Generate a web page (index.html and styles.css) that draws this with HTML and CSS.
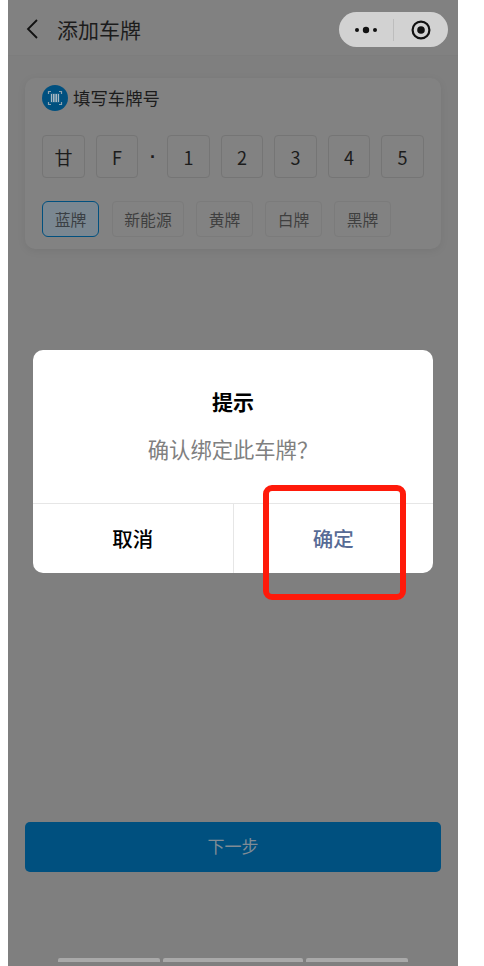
FILE: index.html
```html
<!DOCTYPE html>
<html lang="zh">
<head>
<meta charset="utf-8">
<title>添加车牌</title>
<link rel="stylesheet" href="styles.css">
</head>
<body>
<div class="phone">
  <header class="nav">
    <svg class="back" width="14" height="22" viewBox="0 0 14 22"><path d="M12 2 L3 11 L12 20" fill="none" stroke="#111" stroke-width="1.8"/></svg>
    <h1 class="nav-title">添加车牌</h1>
    <div class="capsule">
      <div class="capsule-part">
        <svg width="24" height="8" viewBox="0 0 24 8"><circle cx="3" cy="4" r="2" fill="#111"/><circle cx="12" cy="4" r="3.2" fill="#111"/><circle cx="21" cy="4" r="2" fill="#111"/></svg>
      </div>
      <div class="capsule-line"></div>
      <div class="capsule-part">
        <svg width="20" height="20" viewBox="0 0 20 20"><circle cx="10" cy="10" r="8.4" fill="none" stroke="#111" stroke-width="2.2"/><circle cx="10" cy="10" r="3.8" fill="#111"/></svg>
      </div>
    </div>
  </header>
  <main class="content">
    <section class="card">
      <div class="card-head">
        <svg class="card-icon" width="26" height="26" viewBox="0 0 26 26"><circle cx="13" cy="13" r="13" fill="#00507f"/><path d="M6.5 9V6.5H9M17 6.5H19.5V9M19.5 17V19.5H17M9 19.5H6.5V17" fill="none" stroke="#8fa3af" stroke-width="1.2"/><path d="M8.5 8.5h9v9h-9z" fill="#2b6a90"/><path d="M9.5 9v8M11.5 9v8M13 9v8M14.5 9v8M16.5 9v8" stroke="#b4c0c7" stroke-width="0.9"/></svg>
        <span class="card-title">填写车牌号</span>
      </div>
      <div class="plate">
        <span class="cell">甘</span>
        <span class="cell">F</span>
        <span class="dot">·</span>
        <span class="cell">1</span>
        <span class="cell">2</span>
        <span class="cell">3</span>
        <span class="cell">4</span>
        <span class="cell">5</span>
      </div>
      <div class="tags">
        <span class="tag tag-active">蓝牌</span>
        <span class="tag tag-wide">新能源</span>
        <span class="tag">黄牌</span>
        <span class="tag">白牌</span>
        <span class="tag">黑牌</span>
      </div>
    </section>
    <button class="next">下一步</button>
    <div class="bars">
      <span class="bar bar-a"></span>
      <span class="bar bar-b"></span>
      <span class="bar bar-a"></span>
    </div>
  </main>
  <div class="dialog">
    <div class="dialog-body">
      <div class="dialog-title">提示</div>
      <div class="dialog-msg">确认绑定此车牌？</div>
    </div>
    <div class="dialog-actions">
      <div class="action">取消</div>
      <div class="action action-ok">确定</div>
    </div>
  </div>
  <div class="highlight"></div>
</div>
</body>
</html>
```
FILE: styles.css
```css
* { box-sizing: border-box; }
html, body { margin: 0; padding: 0; background: #fff; }
body { font-family: "Noto Sans CJK SC", "Noto Sans", sans-serif; }
.phone {
  position: relative;
  width: 450px;
  height: 966px;
  margin-left: 8px;
  background: #7f7f7f;
  overflow: hidden;
}
.nav {
  display: flex;
  align-items: center;
  height: 55px;
  padding: 2px 10px 0 17px;
  background: #818181;
  box-shadow: 0 1px 0 #7d7d7d;
}
.back { flex: none; }
.nav-title {
  margin: 0 0 0 18px;
  font-size: 21px;
  line-height: 30px;
  font-weight: 400;
  color: #1c1c1c;
  flex: 1;
}
.capsule {
  display: flex;
  align-items: center;
  width: 109px;
  height: 35px;
  margin-top: 2px;
  border-radius: 18px;
  background: #d2d2d2;
}
.capsule-part { flex: 1; display: flex; justify-content: center; align-items: center; }
.capsule-line { width: 1px; height: 22px; background: #bdbdbd; }
.content { display: flex; flex-direction: column; padding: 23px 17px 0; }
.card {
  height: 171px;
  padding: 7px 17px 0;
  background: #828282;
  border-radius: 10px;
  box-shadow: 0 2px 8px rgba(0,0,0,0.07);
}
.card-head { display: flex; align-items: center; gap: 5px; height: 26px; }
.card-icon { flex: none; }
.card-title { font-size: 17.4px; line-height: 26px; color: #1c1c1c; }
.plate { display: flex; align-items: center; margin-top: 24px; }
.cell {
  width: 43px;
  height: 43px;
  margin-right: 10.6px;
  display: flex;
  align-items: center;
  justify-content: center;
  border: 1px solid #757575;
  border-radius: 4px;
  font-size: 18px;
  color: #1c1c1c;
}
.cell:last-child { margin-right: 0; }
.dot {
  width: 18px;
  padding-left: 1px;
  font-family: "Liberation Sans", sans-serif;
  font-size: 18px;
  font-weight: 700;
  line-height: 20px;
  color: #1c1c1c;
}
.tags { display: flex; gap: 12px; margin-top: 23px; }
.tag {
  display: flex;
  align-items: center;
  justify-content: center;
  width: 57px;
  height: 36px;
  border: 1px solid #7b7b7b;
  border-radius: 4px;
  font-size: 15.8px;
  color: #3f3f3f;
}
.tag-wide { width: 72px; margin-left: 1px; }
.tag-active { background: #7a8791; border-color: #00507f; color: #3a3f44; border-radius: 6px; }
.next {
  display: block;
  height: 50px;
  margin-top: 573px;
  border: 0;
  border-radius: 5px;
  background: #00507f;
  color: #808c95;
  font: 400 17px/48px "Noto Sans CJK SC", sans-serif;
  padding: 0 0 2px;
}
.bars { display: flex; gap: 3px; margin: 86px 0 0 33px; }
.bar { height: 4px; border-radius: 2px 2px 0 0; background: #a9a9a9; }
.bar-a { width: 102px; }
.bar-b { width: 140px; }
.dialog {
  position: absolute;
  left: 25px;
  top: 350px;
  width: 400px;
  height: 223px;
  display: flex;
  flex-direction: column;
  background: #fff;
  border-radius: 10px;
  overflow: hidden;
}
.dialog-body { height: 154px; padding-top: 35px; text-align: center; border-bottom: 1px solid #e6e6e6; }
.dialog-title { font-size: 21px; line-height: 32px; font-weight: 700; color: #000; }
.dialog-msg { margin-top: 16px; font-size: 21.3px; line-height: 32px; color: #808080; }
.dialog-actions { flex: 1; display: flex; }
.action {
  flex: 1;
  display: flex;
  align-items: center;
  justify-content: center;
  font-size: 20.5px;
  font-weight: 500;
  color: #000;
  padding-bottom: 1px;
}
.action-ok { color: #576b95; border-left: 1px solid #e6e6e6; }
.highlight {
  position: absolute;
  left: 255px;
  top: 485px;
  width: 143px;
  height: 115px;
  border: 6px solid #ff1a0a;
  border-radius: 9px;
}
```
